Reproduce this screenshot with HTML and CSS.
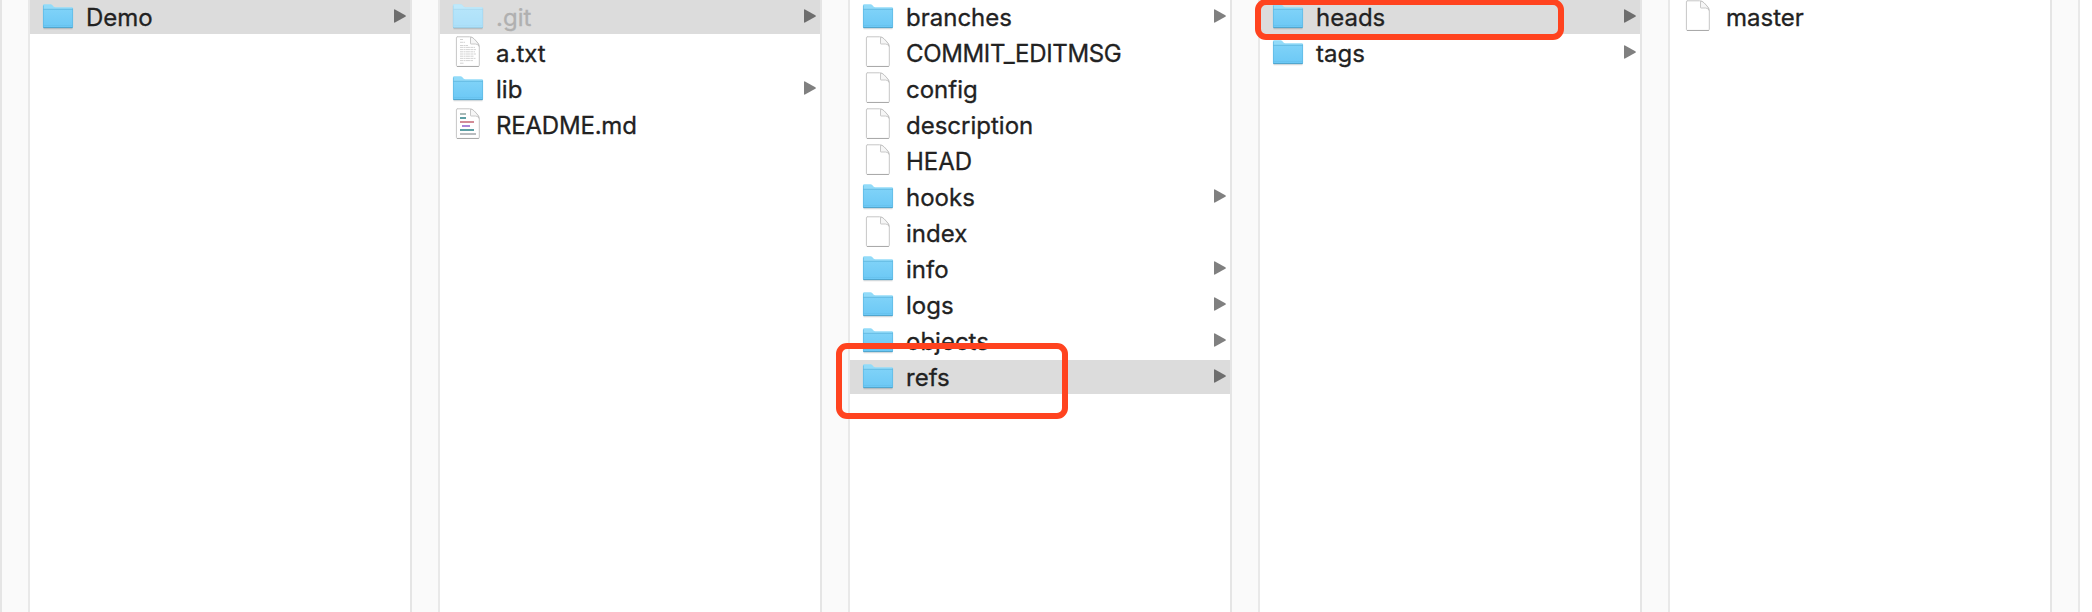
FILE: index.html
```
<!DOCTYPE html>
<html lang="en">
<head>
<meta charset="utf-8">
<title>Demo</title>
<link rel="stylesheet" href="styles.css">
</head>
<body>
<svg class="defs" aria-hidden="true">
  <defs>
    <linearGradient id="blue" x1="0" y1="0" x2="0" y2="1"><stop offset="0" stop-color="#7fd2f8"/><stop offset="1" stop-color="#6bc8f5"/></linearGradient>
    <symbol id="folder" viewBox="0 0 32 34">
      <path d="M1.5 28.7h29" stroke="#000" stroke-opacity=".14" stroke-width="1.2"/>
      <path d="M1 27V5.5Q1 4.3 2.2 4.3H8.5Q9.5 4.3 10.2 5L11.5 6.5Q12.2 7.2 13.2 7.2H29.8Q31 7.2 31 8.4V27Q31 28 30 28H2Q1 28 1 27Z" fill="#92dbf9"/>
      <path d="M1 9H31V27Q31 28 30 28H2Q1 28 1 27Z" fill="url(#blue)"/>
      <path d="M1 9.3H31" stroke="#5fb5dc" stroke-width=".8"/>
      <path d="M1.4 5.5V27M30.6 8.5V27" stroke="#5bb7e2" stroke-width=".7"/>
      <path d="M1.5 25.5H30.5" stroke="#62bde8" stroke-width=".5"/>
      <path d="M1.3 27.6H30.7" stroke="#4fa3ca" stroke-width="1"/>
    </symbol>
    <symbol id="folder-dim" viewBox="0 0 32 34">
      <use href="#folder"/>
      <path d="M1 27V5.5Q1 4.3 2.2 4.3H8.5Q9.5 4.3 10.2 5L11.5 6.5Q12.2 7.2 13.2 7.2H29.8Q31 7.2 31 8.4V27Q31 28 30 28H2Q1 28 1 27Z" fill="#ecf8fd" fill-opacity=".5"/>
    </symbol>
    <symbol id="file" viewBox="0 0 32 34">
      <path d="M5 .8H17.6Q20 .8 22 2.8L25 6Q27.3 8.3 27.3 11V29.4Q27.3 30.4 26.3 30.4H5.4Q4.4 30.4 4.4 29.4V1.8Q4.4.8 5.4.8Z" fill="#fff" stroke="#c6c6c6" stroke-width="1"/>
      <path d="M18.5 1.2V7.6Q18.5 8 19 8H23.5Q26 8 27 10.3Q26.8 8 25 6L22 2.8Q20.3 1 18.5 1.2Z" fill="#f6f6f6" stroke="#bcbcbc" stroke-width=".8"/>
      <path d="M5 30.5H26.8" stroke="#aaa" stroke-width="1"/>
    </symbol>
    <symbol id="text" viewBox="0 0 32 34">
      <use href="#file"/>
      <g stroke="#c8c8c8" stroke-width=".8" stroke-dasharray="3 .5 2 .4 4 .5">
        <path d="M8 3.5H11M8 6.3H13M8 9.5H16M8 11.4H23M8 13.6H24M8 15.8H23M8 18H24M8 20.2H22M8 22.4H23.5M8 24.6H21M8 27.2H12"/>
      </g>
    </symbol>
    <symbol id="markdown" viewBox="0 0 32 34">
      <use href="#file"/>
      <g stroke-width="2">
        <path d="M8 6H14" stroke="#a9bab8"/><path d="M8 10H14" stroke="#5d9fa4"/>
        <path d="M8 14H22" stroke="#d38c97"/><path d="M10 18H18" stroke="#aa88d8"/>
        <path d="M8 22H22" stroke="#5d9fa4"/><path d="M8 26H24" stroke="#b8bcbf"/>
      </g>
    </symbol>
    <symbol id="arrow" viewBox="0 0 12 14">
      <path d="M0 1Q0 0 1 .4L11.3 6.2Q12.5 7 11.3 7.8L1 13.6Q0 14 0 13Z"/>
    </symbol>
  </defs>
</svg>
<main class="browser">
  <div class="gutter"></div>
  <ul class="column">
    <li class="row selected"><svg class="icon"><use href="#folder"/></svg><span class="name">Demo</span><svg class="arrow"><use href="#arrow"/></svg></li>
  </ul>
  <div class="gutter"></div>
  <ul class="column">
    <li class="row selected hidden-item"><svg class="icon"><use href="#folder-dim"/></svg><span class="name">.git</span><svg class="arrow"><use href="#arrow"/></svg></li>
    <li class="row"><svg class="icon"><use href="#text"/></svg><span class="name">a.txt</span></li>
    <li class="row"><svg class="icon"><use href="#folder"/></svg><span class="name">lib</span><svg class="arrow"><use href="#arrow"/></svg></li>
    <li class="row"><svg class="icon"><use href="#markdown"/></svg><span class="name readme">README.md</span></li>
  </ul>
  <div class="gutter"></div>
  <ul class="column">
    <li class="row"><svg class="icon"><use href="#folder"/></svg><span class="name">branches</span><svg class="arrow"><use href="#arrow"/></svg></li>
    <li class="row"><svg class="icon"><use href="#file"/></svg><span class="name caps">COMMIT_EDITMSG</span></li>
    <li class="row"><svg class="icon"><use href="#file"/></svg><span class="name">config</span></li>
    <li class="row"><svg class="icon"><use href="#file"/></svg><span class="name">description</span></li>
    <li class="row"><svg class="icon"><use href="#file"/></svg><span class="name">HEAD</span></li>
    <li class="row"><svg class="icon"><use href="#folder"/></svg><span class="name">hooks</span><svg class="arrow"><use href="#arrow"/></svg></li>
    <li class="row"><svg class="icon"><use href="#file"/></svg><span class="name">index</span></li>
    <li class="row"><svg class="icon"><use href="#folder"/></svg><span class="name">info</span><svg class="arrow"><use href="#arrow"/></svg></li>
    <li class="row"><svg class="icon"><use href="#folder"/></svg><span class="name">logs</span><svg class="arrow"><use href="#arrow"/></svg></li>
    <li class="row"><svg class="icon"><use href="#folder"/></svg><span class="name">objects</span><svg class="arrow"><use href="#arrow"/></svg></li>
    <li class="row selected"><svg class="icon"><use href="#folder"/></svg><span class="name">refs</span><svg class="arrow"><use href="#arrow"/></svg><i class="mark mark-refs"></i></li>
  </ul>
  <div class="gutter"></div>
  <ul class="column">
    <li class="row selected"><svg class="icon"><use href="#folder"/></svg><span class="name">heads</span><svg class="arrow"><use href="#arrow"/></svg><i class="mark mark-heads"></i></li>
    <li class="row"><svg class="icon"><use href="#folder"/></svg><span class="name">tags</span><svg class="arrow"><use href="#arrow"/></svg></li>
  </ul>
  <div class="gutter"></div>
  <ul class="column">
    <li class="row"><svg class="icon"><use href="#file"/></svg><span class="name">master</span></li>
  </ul>
  <div class="gutter"></div>
</main>
</body>
</html>
```
FILE: styles.css
```
* { box-sizing: border-box; }
body { margin: 0; background: #fff; overflow: hidden; }
.defs { position: absolute; width: 0; height: 0; }
.browser {
  display: flex;
  height: 612px;
  overflow: hidden;
  font-family: Inter, Roboto, sans-serif;
  font-size: 24px;
  color: #222;
}
.gutter {
  flex: 0 0 30px;
  background: #fafafa;
  border-left: 2px solid #e5e5e5;
  border-right: 2px solid #e9e9e9;
}
.column {
  flex: 0 0 380px;
  display: flex;
  flex-direction: column;
  gap: 2px;
  margin: 0;
  padding: 0;
  list-style: none;
}
.row {
  position: relative;
  display: flex;
  align-items: center;
  flex: 0 0 34px;
  height: 34px;
  padding: 0 4px 0 12px;
}
.selected { background: #dcdcdc; }
.icon { flex: none; width: 32px; height: 34px; }
.name {
  flex: 1;
  padding: 2px 0 0 12px;
  line-height: 34px;
  white-space: nowrap;
  -webkit-text-stroke: 0.3px currentColor;
}
.caps { letter-spacing: -0.35px; }
.readme { letter-spacing: -0.2px; }
.arrow { flex: none; width: 12px; height: 14px; margin-top: -2px; fill: #808080; }
.selected .arrow { fill: #6e6e6e; }
.hidden-item .name { color: #b0b0b0; }
.mark {
  position: absolute;
  z-index: 1;
  border: 6px solid #ff431f;
}
.mark-refs { left: -14px; top: -17px; width: 232px; height: 76px; border-radius: 11px; }
.mark-heads { left: -5px; top: -1px; width: 309px; height: 41px; border-radius: 11px; }
```
